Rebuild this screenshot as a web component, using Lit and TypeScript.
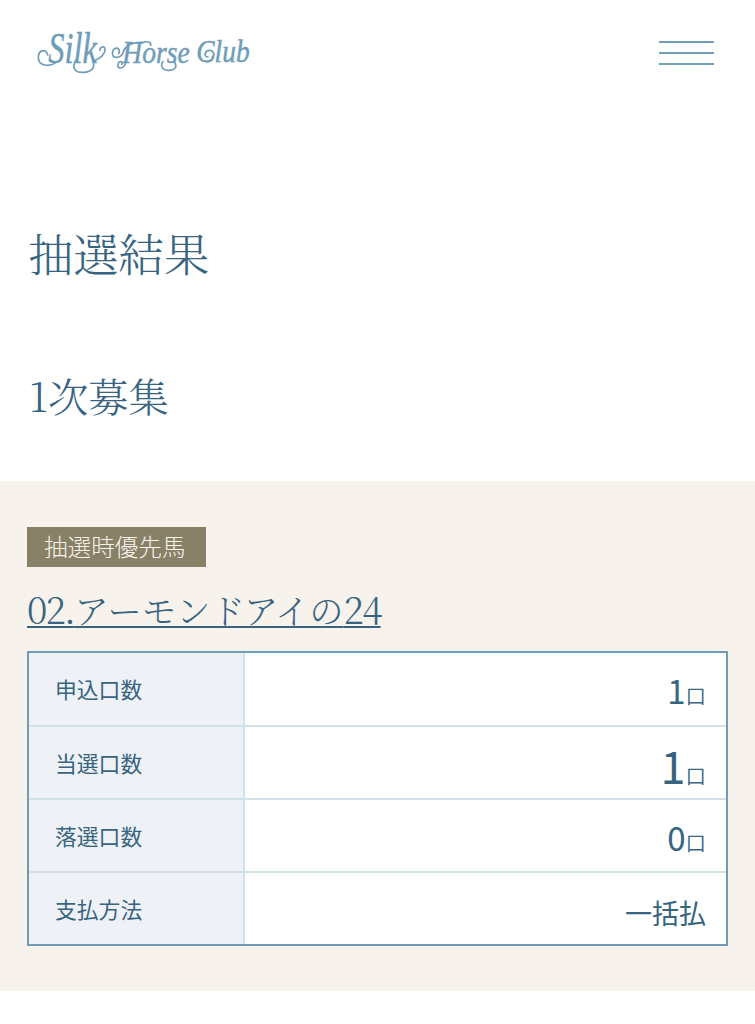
import { LitElement, html, css, svg } from "lit";
import { customElement, property } from "lit/decorators.js";

@customElement("club-logo")
class ClubLogo extends LitElement {
  static styles = css`
    :host { display: block; width: 240px; height: 65px; }
    svg { display: block; width: 100%; height: 100%; }
    text { font-family: "Liberation Serif", serif; font-style: italic; fill: #6f9db8; stroke: #6f9db8; stroke-width: 1.4; }
    path { fill: none; stroke: #6f9db8; stroke-width: 5; stroke-linecap: round; }
    .silk { font-size: 132px; }
    .word { font-size: 95px; }
  `;
  render() {
    return html`<svg viewBox="0 0 720 195" role="img" aria-label="Silk Horse Club">
      ${svg`
        <text class="silk" x="70" y="128" textLength="146" lengthAdjust="spacingAndGlyphs">Silk</text>
        <text class="word" x="292" y="128" textLength="202" lengthAdjust="spacingAndGlyphs">Horse</text>
        <text class="word" x="514" y="126" textLength="160" lengthAdjust="spacingAndGlyphs">Club</text>
        <path d="M68 105C66 86 43 88 40 109C38 140 76 142 94 126" />
        <path d="M151 122C138 151 157 159 178 157C204 154 211 138 203 124" />
        <path d="M205 124C221 116 240 107 240 88C239 76 224 80 225 91" />
        <path d="M281 101C290 85 269 77 263 94C257 121 289 115 295 95C302 73 322 67 352 68" />
        <path d="M303 124C296 152 274 147 279 132C282 121 295 124 290 133" />
        <path d="M352 68C363 63 380 65 377 76" />
        <path d="M414 124C405 138 412 151 431 151C453 151 457 138 448 126" />
        <path d="M544 126C572 124 572 91 554 91C540 91 534 109 549 111" />
      `}
    </svg>`;
  }
}

@customElement("result-row")
class ResultRow extends LitElement {
  @property() label = "";
  @property() value = "";
  @property() unit = "";
  @property({ reflect: true }) size = "normal";
  static styles = css`
    :host { display: grid; grid-template-columns: 216px 1fr; grid-template-rows: 100%; box-sizing: border-box; color: #376480; min-height: 0; }
    .label {
      background: #eef2f6; border-right: 2px solid #d2e0e8; padding-left: 26px;
      font-size: 21.8px; line-height: 71px;
    }
    .value {
      display: flex; justify-content: flex-end; align-items: baseline;
      padding-right: 20px; font-size: 33px; line-height: 75px;
      overflow: hidden; box-sizing: border-box;
    }
    .unit { font-size: 20.5px; font-weight: 350; }
    :host([size="large"]) .value { font-size: 45px; line-height: 75px; }
    :host([size="text"]) .value { font-size: 27px; line-height: 79px; }
  `;
  render() {
    return html`<div class="label">${this.label}</div>
      <div class="value"><span>${this.value}</span>${this.unit ? html`<span class="unit">${this.unit}</span>` : ""}</div>`;
  }
}

@customElement("app-root")
class AppRoot extends LitElement {
  static styles = css`
    :host { display: block; min-height: 1024px; background: #fff; color: #376480; font-family: "Noto Sans CJK JP", sans-serif; }
    header { display: flex; justify-content: space-between; height: 100px; padding: 20px 41px 0 25px; box-sizing: border-box; }
    .menu { display: flex; flex-direction: column; gap: 9px; width: 55px; padding: 21px 0 0; border: 0; background: none; }
    .menu span { display: block; height: 2px; width: 100%; background: #719fba; }
    h1, h2, h3 { margin: 0; font-weight: 300; font-family: "Noto Serif CJK JP", "Liberation Serif", "Noto Sans CJK JP", serif; }
    .intro { height: 381px; padding: 118px 28px 0; box-sizing: border-box; }
    h1 { font-size: 45.3px; line-height: 70px; }
    h2 { font-size: 40.3px; line-height: 60px; padding: 77px 0 0 1px; }
    .results { background: #f7f2ec; height: 510px; padding: 46px 27px 0; box-sizing: border-box; }
    .badge { width: 179px; height: 40px; padding-left: 17px; box-sizing: border-box; background: #888067; color: #f8f4ed; font-size: 23.6px; line-height: 38px; font-weight: 300; }
    h3 { font-size: 34.3px; line-height: 50px; padding-top: 16px; height: 84px; box-sizing: border-box; }
    h3 a { color: inherit; text-decoration: underline; text-decoration-thickness: 2px; text-underline-offset: 2px; text-decoration-skip-ink: none; }
    h3 .num { font-size: 37px; letter-spacing: -1.8px; }
    .table { display: grid; grid-template-rows: 72px 73px 73px 73px; height: 295px; width: 701px; border: 2px solid #6f9db8; box-sizing: border-box; background: #fff; }
    result-row + result-row { border-top: 2px solid #d2e0e8; }
  `;
  render() {
    return html`
      <header>
        <club-logo></club-logo>
        <button class="menu" aria-label="メニュー"><span></span><span></span><span></span></button>
      </header>
      <section class="intro"><h1>抽選結果</h1><h2>1次募集</h2></section>
      <section class="results">
        <div class="badge">抽選時優先馬</div>
        <h3><a><span class="num">02.</span>アーモンドアイの<span class="num">24</span></a></h3>
        <div class="table">
          <result-row label="申込口数" value="1" unit="口"></result-row>
          <result-row label="当選口数" value="1" unit="口" size="large"></result-row>
          <result-row label="落選口数" value="0" unit="口"></result-row>
          <result-row label="支払方法" value="一括払" size="text"></result-row>
        </div>
      </section>`;
  }
}
